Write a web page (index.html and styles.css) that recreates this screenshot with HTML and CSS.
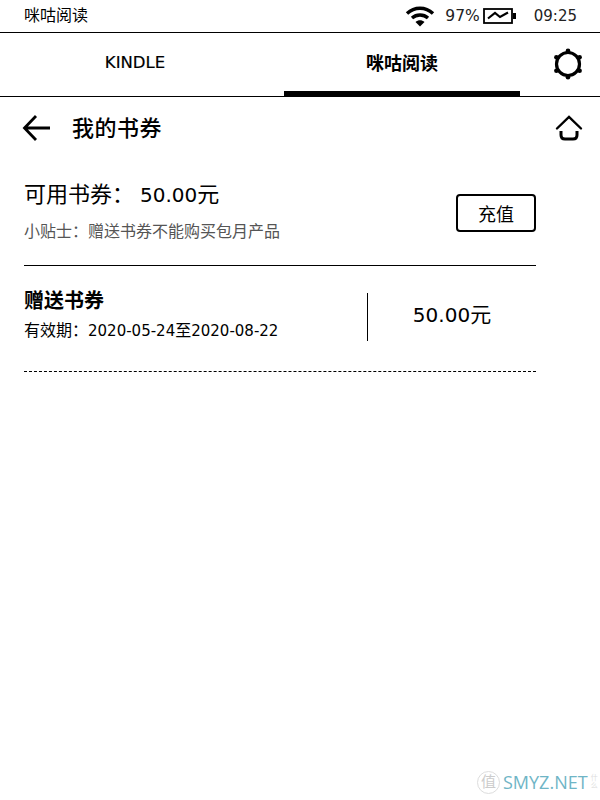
FILE: index.html
```html
<!DOCTYPE html>
<html lang="zh-CN">
<head>
    <meta charset="UTF-8">
    <meta name="viewport" content="width=device-width, initial-scale=1.0">
    <title>我的书券</title>
    <link rel="stylesheet" href="styles.css">
</head>
<body>
    <div class="status-bar">
        <span class="status-title">咪咕阅读</span>
        <svg class="wifi-icon" width="30" height="22" viewBox="0 0 30 22">
            <path d="M2 8.5 C9.5 1.5 20.5 1.5 28 8.5" fill="none" stroke="#000" stroke-width="3.4"/>
            <path d="M7 13 C11.5 9 18.5 9 23 13" fill="none" stroke="#000" stroke-width="3.4"/>
            <path d="M10.5 17 L15 21.5 L19.5 17 C17 14.8 13 14.8 10.5 17 Z" fill="#000"/>
        </svg>
        <span class="battery-text">97%</span>
        <svg class="battery-icon" width="34" height="16" viewBox="0 0 34 16">
            <rect x="1" y="1" width="28" height="14" fill="none" stroke="#000" stroke-width="1.8"/>
            <rect x="30" y="5" width="3" height="6" fill="#000"/>
            <path d="M5 10.5 L12 5 L17 9 L25 4.5" fill="none" stroke="#000" stroke-width="2.2"/>
        </svg>
        <span class="status-time">09:25</span>
    </div>

    <div class="tabs">
        <div class="tab">KINDLE</div>
        <div class="tab tab-active">咪咕阅读</div>
        <div class="tab-settings">
            <svg width="34" height="34" viewBox="0 0 34 34">
                <circle cx="17" cy="17" r="11.5" fill="none" stroke="#000" stroke-width="3.2"/>
                <circle cx="17" cy="3.8" r="2.3" fill="#000"/>
                <circle cx="17" cy="30.2" r="2.3" fill="#000"/>
                <circle cx="5.4" cy="10.3" r="2.3" fill="#000"/>
                <circle cx="28.6" cy="10.3" r="2.3" fill="#000"/>
                <circle cx="5.4" cy="23.7" r="2.3" fill="#000"/>
                <circle cx="28.6" cy="23.7" r="2.3" fill="#000"/>
            </svg>
        </div>
    </div>

    <div class="page-header">
        <svg class="back-icon" width="30" height="28" viewBox="0 0 30 28">
            <path d="M28 14 H3 M14 2 L2.5 14 L14 26" fill="none" stroke="#000" stroke-width="2.8"/>
        </svg>
        <h1 class="page-title">我的书券</h1>
        <svg class="home-icon" width="28" height="26" viewBox="0 0 28 26">
            <path d="M2 13.5 L14 2 L26 13.5" fill="none" stroke="#000" stroke-width="2.4" stroke-linecap="round"/>
            <path d="M6 16 V20 Q6 24 10 24 H18 Q22 24 22 20 V16" fill="none" stroke="#000" stroke-width="3"/>
        </svg>
    </div>

    <div class="content">
        <div class="summary">
            <div class="summary-text">
                <div class="balance">可用书券：<span class="balance-value"><span class="num">50.00</span>元</span></div>
                <div class="tip">小贴士：赠送书券不能购买包月产品</div>
            </div>
            <button class="recharge">充值</button>
        </div>

        <div class="voucher">
            <div class="voucher-info">
                <div class="voucher-name">赠送书券</div>
                <div class="voucher-date">有效期：<span class="date-num">2020-05-24</span>至<span class="date-num">2020-08-22</span></div>
            </div>
            <div class="voucher-divider"></div>
            <div class="voucher-amount"><span class="num">50.00</span>元</div>
        </div>
    </div>

    <div class="watermark">
        <span class="watermark-seal">值</span>
        <span class="watermark-text">SMYZ.NET</span>
        <span class="watermark-side">什么</span>
    </div>
</body>
</html>
```

FILE: styles.css
```css
html, body {
    margin: 0;
    padding: 0;
}

body {
    width: 600px;
    height: 800px;
    position: relative;
    overflow: hidden;
    background-color: white;
    color: black;
    font-family: "DejaVu Sans", "Noto Sans CJK SC", sans-serif;
}

.status-bar {
    display: flex;
    align-items: center;
    height: 32px;
    padding-left: 24px;
    border-bottom: 1px solid black;
    font-size: 15px;
}

.status-title {
    flex: 1;
    font-size: 16px;
    margin-top: -5px;
}

.wifi-icon {
    margin-right: 10px;
}

.battery-text {
    font-size: 15.5px;
    color: #222;
}

.battery-icon {
    margin-left: 3px;
}

.status-time {
    margin-left: 17px;
    margin-right: 23px;
    color: #222;
}

.tabs {
    display: flex;
    height: 63px;
    border-bottom: 1px solid black;
}

.tab {
    width: 236px;
    margin-left: 17px;
    display: flex;
    align-items: center;
    justify-content: center;
    font-size: 16.5px;
    box-sizing: border-box;
    padding-bottom: 4px;
    -webkit-text-stroke: 0.2px black;
}

.tab-active {
    margin-left: 31px;
    font-size: 18px;
    font-weight: bold;
    border-bottom: 5px solid black;
    padding-bottom: 1px;
    -webkit-text-stroke: 0;
}

.tab-settings {
    flex: 1;
    display: flex;
    align-items: center;
    justify-content: flex-end;
    padding-right: 15px;
    padding-bottom: 1px;
}

.page-header {
    display: flex;
    align-items: center;
    height: 62px;
    padding-left: 22px;
    padding-right: 17px;
}

.page-title {
    flex: 1;
    margin: -5px 0 0 20px;
    font-size: 22px;
    font-weight: 500;
    letter-spacing: 0.5px;
}

.content {
    width: 512px;
    margin-left: 24px;
}

.summary {
    display: flex;
    align-items: flex-start;
    justify-content: space-between;
    height: 106px;
    border-bottom: 1px solid black;
}

.summary-text {
    padding-top: 20px;
}

.balance {
    font-size: 22px;
    line-height: 32px;
}

.balance-value {
    margin-left: 6px;
}

.num {
    font-size: 20px;
}

.tip {
    margin-top: 9px;
    font-size: 16px;
    line-height: 24px;
    color: #555;
}

.recharge {
    width: 80px;
    height: 38px;
    margin-top: 35px;
    background-color: white;
    border: 2px solid black;
    border-radius: 4px;
    font-family: inherit;
    font-size: 18px;
    color: black;
    padding: 0;
}

.voucher {
    display: flex;
    align-items: center;
    height: 106px;
    box-sizing: border-box;
    padding-bottom: 5px;
    border-bottom: 1px dashed black;
}

.voucher-info {
    width: 343px;
}

.voucher-name {
    font-size: 20px;
    line-height: 26px;
    font-weight: bold;
}

.voucher-date {
    margin-top: 4px;
    font-size: 16px;
    line-height: 26px;
}

.date-num {
    font-size: 15px;
}

.voucher-divider {
    width: 1px;
    height: 48px;
    margin-top: 1px;
    background-color: black;
}

.voucher-amount {
    flex: 1;
    margin-top: -6px;
    text-align: center;
    font-size: 21px;
}

.watermark {
    position: absolute;
    left: 477px;
    top: 770px;
    display: flex;
    align-items: center;
    gap: 3px;
}

.watermark-seal {
    width: 21px;
    height: 21px;
    border: 1px solid #ddd;
    border-radius: 50%;
    font-size: 15px;
    line-height: 21px;
    text-align: center;
    color: #ccc;
}

.watermark-text {
    font-family: "Open Sans", sans-serif;
    font-size: 18px;
    color: #6fb5c6;
}

.watermark-side {
    width: 7px;
    font-size: 7px;
    line-height: 8px;
    color: #ddd;
}
```
